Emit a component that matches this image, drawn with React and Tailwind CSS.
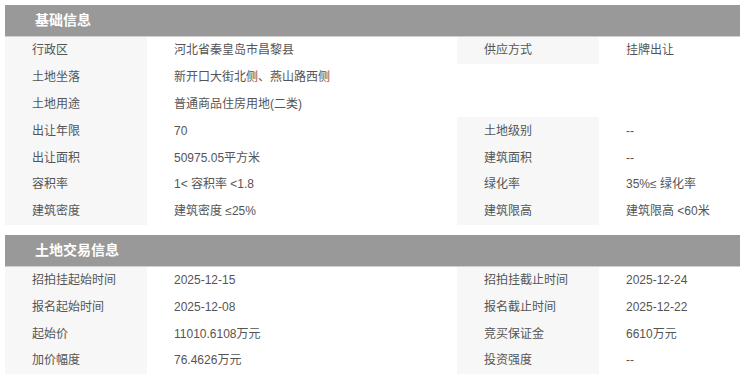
const basic = [
  ['行政区', '河北省秦皇岛市昌黎县', '供应方式', '挂牌出让'],
  ['土地坐落', '新开口大街北侧、燕山路西侧', null, null],
  ['土地用途', '普通商品住房用地(二类)', null, null],
  ['出让年限', '70', '土地级别', '--'],
  ['出让面积', '50975.05平方米', '建筑面积', '--'],
  ['容积率', '1< 容积率 <1.8', '绿化率', '35%≤ 绿化率'],
  ['建筑密度', '建筑密度 ≤25%', '建筑限高', '建筑限高 <60米'],
];

const trade = [
  ['招拍挂起始时间', '2025-12-15', '招拍挂截止时间', '2025-12-24'],
  ['报名起始时间', '2025-12-08', '报名截止时间', '2025-12-22'],
  ['起始价', '11010.6108万元', '竞买保证金', '6610万元'],
  ['加价幅度', '76.4626万元', '投资强度', '--'],
];

function Section({ title, rows }) {
  return (
    <div>
      <div className="h-[32px] bg-[#999999] border-b border-[#cfcfcf] flex items-center pl-[30px] text-white font-bold text-[14px]">
        {title}
      </div>
      <div>
        {rows.map((r, i) => (
          <div key={i} className="grid grid-cols-[142px_310px_142px_1fr] h-[26.8px] items-stretch text-[12px] text-[#555]">
            <div className="bg-[#f7f7f7] pl-[27px] flex items-center">{r[0]}</div>
            <div className="pl-[27px] flex items-center">{r[1]}</div>
            <div className={`pl-[27px] flex items-center ${r[2] ? 'bg-[#f7f7f7]' : ''}`}>{r[2]}</div>
            <div className="pl-[27px] flex items-center">{r[3]}</div>
          </div>
        ))}
      </div>
    </div>
  );
}

export default function App() {
  return (
    <div
      className="w-[740px] h-[374px] overflow-hidden bg-white pt-[5px] pl-[5px]"
      style={{ fontFamily: '"Liberation Sans", "Noto Sans CJK SC", sans-serif' }}
    >
      <div className="w-[735px] flex flex-col gap-[10px]">
        <Section title="基础信息" rows={basic} />
        <Section title="土地交易信息" rows={trade} />
      </div>
    </div>
  );
}
